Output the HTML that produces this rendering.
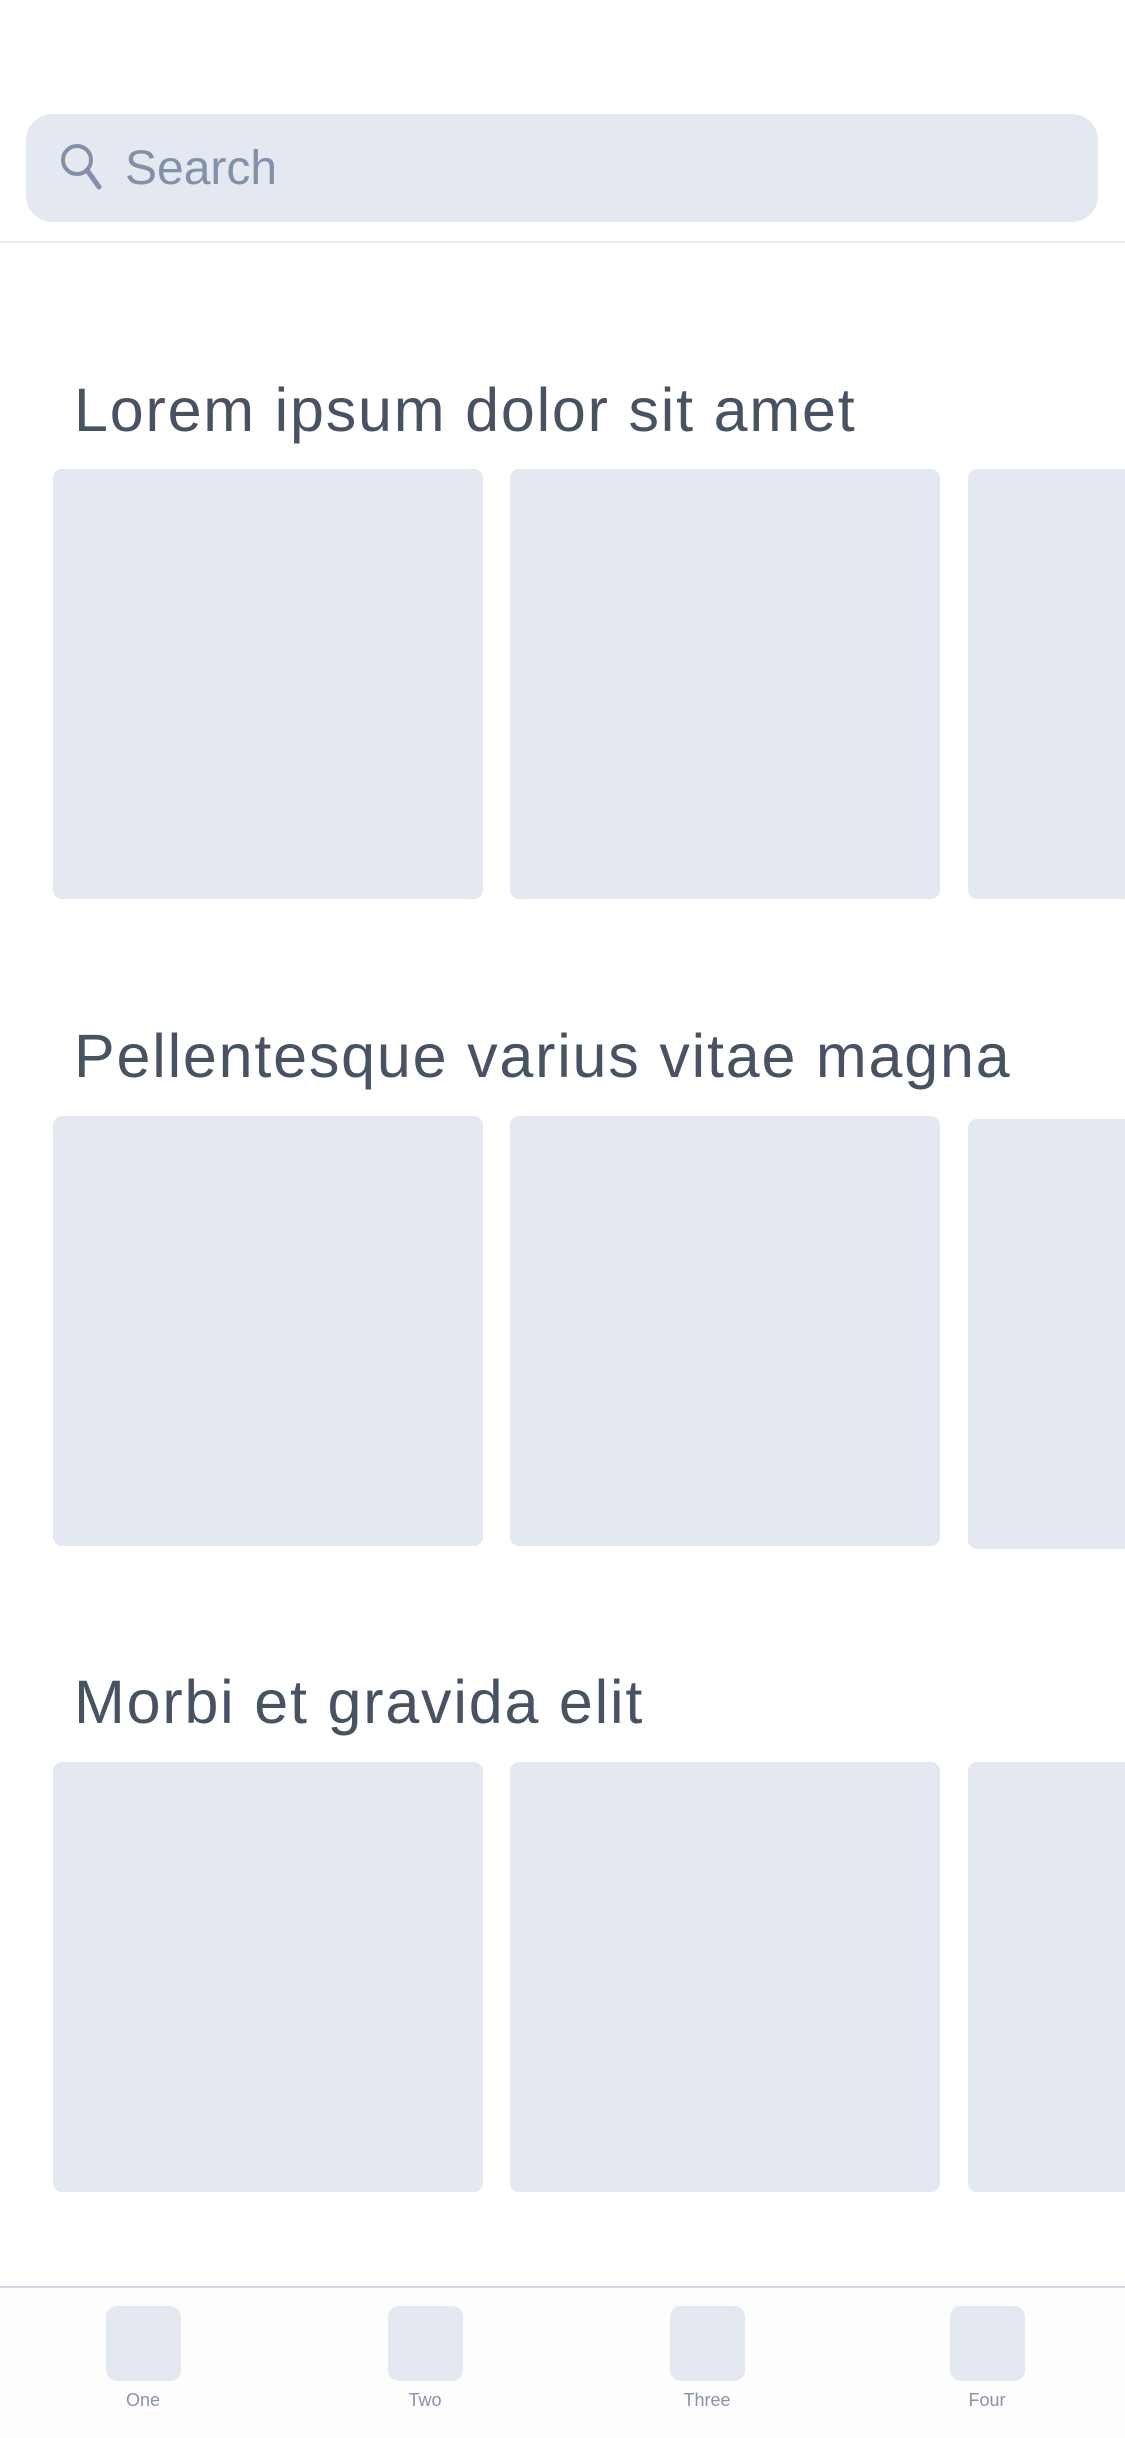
<!DOCTYPE html>
<html><head><meta charset="utf-8"><style>
html,body{margin:0;padding:0;}
body{width:1125px;height:2436px;position:relative;background:#fff;font-family:"Liberation Sans",sans-serif;overflow:hidden;}
.search{position:absolute;left:26px;top:114px;width:1072px;height:108px;background:#e4e8f1;border-radius:26px;}
.search span{position:absolute;left:99px;top:25px;font-size:48px;color:#8391a8;line-height:60px;}
.search svg{position:absolute;left:30px;top:28px;}
.div{position:absolute;left:0;top:241px;width:1125px;height:2px;background:#e8ebf1;}
h2{position:absolute;left:74px;margin:0;font-weight:normal;font-size:61px;letter-spacing:1.8px;color:#475263;line-height:70px;}
.card{position:absolute;width:430px;height:430px;background:#e4e8f1;border-radius:9px;}
.nav{position:absolute;left:0;top:2286px;width:1125px;height:150px;background:#fdfdfe;border-top:2px solid #d3d9e5;}
.tab{position:absolute;top:18px;width:120px;margin-left:-60px;text-align:center;}
.tab div{width:75px;height:75px;margin:0 auto;background:#e4e8f1;border-radius:11px;}
.tab span{display:block;margin-top:9px;font-size:18px;color:#8793ab;}
</style></head><body>
<div class="search">
<svg width="50" height="50" viewBox="0 0 50 50"><circle cx="21" cy="18" r="14" fill="none" stroke="#8391a8" stroke-width="4"/><line x1="31" y1="28" x2="43" y2="45" stroke="#8391a8" stroke-width="5" stroke-linecap="round"/></svg>
<span>Search</span></div>
<div class="div"></div>

<h2 style="top:375px">Lorem ipsum dolor sit amet</h2>
<div class="card" style="left:53px;top:469px"></div>
<div class="card" style="left:510px;top:469px"></div>
<div class="card" style="left:968px;top:469px"></div>

<h2 style="top:1021px">Pellentesque varius vitae magna</h2>
<div class="card" style="left:53px;top:1116px"></div>
<div class="card" style="left:510px;top:1116px"></div>
<div class="card" style="left:968px;top:1119px"></div>

<h2 style="top:1667px">Morbi et gravida elit</h2>
<div class="card" style="left:53px;top:1762px"></div>
<div class="card" style="left:510px;top:1762px"></div>
<div class="card" style="left:968px;top:1762px"></div>

<div class="nav">
<div class="tab" style="left:143px"><div></div><span>One</span></div>
<div class="tab" style="left:425px"><div></div><span>Two</span></div>
<div class="tab" style="left:707px"><div></div><span>Three</span></div>
<div class="tab" style="left:987px"><div></div><span>Four</span></div>
</div>
</body></html>
